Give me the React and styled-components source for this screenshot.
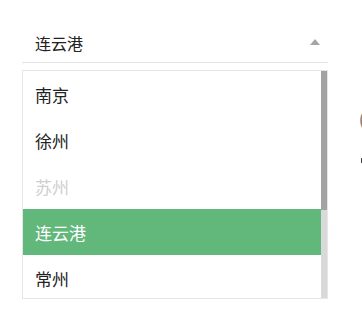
import React from "react";
import styled, { createGlobalStyle } from "styled-components";

const Global = createGlobalStyle`
  html, body { margin: 0; padding: 0; background: #fff; }
  body { font-family: "Noto Sans CJK SC", "Liberation Sans", sans-serif; color: #222; }
`;

const Page = styled.div`
  display: flex;
  align-items: flex-start;
  padding: 24px 0 0 22px;
  width: 362px;
  height: 322px;
  box-sizing: border-box;
  overflow: hidden;
`;

const Select = styled.div`
  width: 306px;
  flex-shrink: 0;
  display: flex;
  flex-direction: column;
`;

const Trigger = styled.div`
  height: 38px;
  display: flex;
  align-items: center;
  justify-content: space-between;
  padding: 0 8px 0 13px;
  border-bottom: 1px solid #e3e3e3;
  font-size: 16px;
  color: #222;
`;

const Caret = styled.span`
  width: 0;
  height: 0;
  border-left: 5px solid transparent;
  border-right: 5px solid transparent;
  border-bottom: 6px solid #a5a5a5;
  margin-top: -2px;
`;

const ListFrame = styled.div`
  margin-top: 7px;
  height: 227px;
  display: flex;
  border: 1px solid #e6e6e6;
`;

const Viewport = styled.ul`
  list-style: none;
  margin: 0;
  padding: 0;
  flex: 1;
  overflow: hidden;
`;

const ScrollTrack = styled.div`
  width: 6px;
  background: #d9d9d9;
  display: flex;
  flex-direction: column;
`;

const ScrollThumb = styled.div`
  height: 139px;
  background: #a3a3a3;
`;

const Item = styled.li`
  height: 46px;
  display: flex;
  align-items: center;
  padding-left: 12px;
  font-size: 17px;
  color: ${p => (p.$disabled ? "#cfcfcf" : p.$active ? "#fff" : "#222")};
  background: ${p => (p.$active ? "#62b77b" : "transparent")};
`;

const Peek = styled.div`
  margin-left: 30px;
  width: 6px;
  flex-shrink: 0;
  overflow: hidden;
  display: flex;
  flex-direction: column;
  padding-top: 83px;
`;

const PeekGlyph = styled.span`
  font-size: 20px;
  line-height: 24px;
  color: #888;
  font-family: "Liberation Sans", sans-serif;
  margin-left: 1px;
`;

const PeekDash = styled.span`
  width: 3px;
  height: 5px;
  margin: 27px 0 0 3px;
  background: #444;
`;

const cities = [
  { name: "南京" },
  { name: "徐州" },
  { name: "苏州", disabled: true },
  { name: "连云港", active: true },
  { name: "常州" },
  { name: "无锡" },
  { name: "南通" },
  { name: "扬州" },
];

export default function App() {
  return (
    <>
      <Global />
      <Page>
        <Select>
          <Trigger>
            <span>连云港</span>
            <Caret />
          </Trigger>
          <ListFrame>
            <Viewport>
              {cities.map(c => (
                <Item key={c.name} $disabled={c.disabled} $active={c.active}>
                  {c.name}
                </Item>
              ))}
            </Viewport>
            <ScrollTrack>
              <ScrollThumb />
            </ScrollTrack>
          </ListFrame>
        </Select>
        <Peek>
          <PeekGlyph>(</PeekGlyph>
          <PeekDash />
        </Peek>
      </Page>
    </>
  );
}
